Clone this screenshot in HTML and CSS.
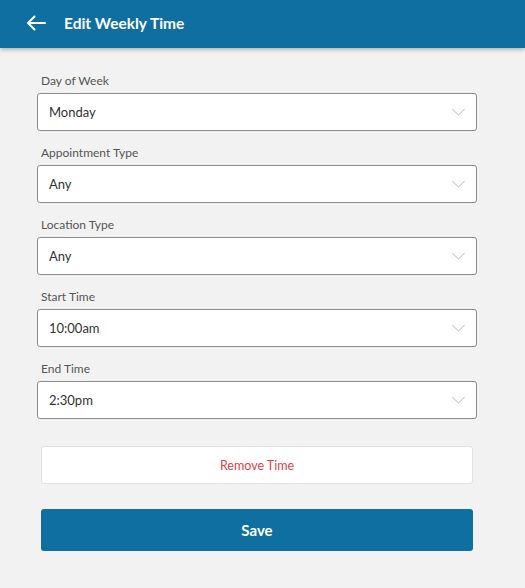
FILE: index.html
```html
<!DOCTYPE html>
<html lang="en">
<head>
    <meta charset="UTF-8">
    <meta name="viewport" content="width=device-width, initial-scale=1.0">
    <title>Edit Weekly Time</title>
    <link rel="stylesheet" href="styles.css">
</head>
<body>

<header class="topbar">
  <span class="back">
    <svg width="20" height="16" viewBox="0 0 20 16"><path d="M19 8H2M8.5 1.5L2 8l6.5 6.5" fill="none" stroke="#fff" stroke-width="2" stroke-linecap="round" stroke-linejoin="round"/></svg>
  </span>
  <h1>Edit Weekly Time</h1>
</header>

<div class="form">
  <!-- Jour -->
  <div class="field">
    <label>Day of Week</label>
    <div class="select"><span>Monday</span><i class="chev"></i></div>
  </div>
  <div class="field">
    <label>Appointment Type</label>
    <div class="select"><span>Any</span><i class="chev"></i></div>
  </div>
  <div class="field">
    <label>Location Type</label>
    <div class="select"><span>Any</span><i class="chev"></i></div>
  </div>
  <div class="field">
    <label>Start Time</label>
    <div class="select"><span>10:00am</span><i class="chev"></i></div>
  </div>
  <div class="field">
    <label>End Time</label>
    <div class="select"><span>2:30pm</span><i class="chev"></i></div>
  </div>

  <button class="btn-remove">Remove Time</button>
  <button class="btn-save">Save</button>
</div>

</body>
</html>
```

FILE: styles.css
```css
body {
    margin: 0;
    font-family: Lato, 'Noto Sans', sans-serif;
    background: #f2f2f2;
    color: #333;
    min-height: 100vh;
}
.topbar {
    height: 48px;
    box-sizing: border-box;
    padding-bottom: 3px;
    background: #0f6fa0;
    display: flex;
    align-items: center;
    padding-left: 26px;
    box-shadow: 0 2px 4px rgba(0,0,0,0.25);
}
.back {
    display: flex;
    width: 38px;
}
.topbar h1 {
    margin: 0;
    font-size: 15.5px;
    font-weight: 700;
    color: #fff;
}
.form {
    width: 440px;
    margin-left: 37px;
    padding-top: 25px;
}
.field {
    margin-bottom: 14px;
}
.field label {
    display: block;
    font-size: 12px;
    color: #555;
    padding-left: 4px;
    margin-bottom: 5px;
    line-height: 15px;
}
.select {
    height: 36px;
    background: #fff;
    border: 1px solid #8a8a8a;
    border-radius: 3px;
    display: flex;
    align-items: center;
    justify-content: space-between;
    padding: 0 13px 0 11px;
    font-size: 13px;
    color: #333;
}
.chev {
    width: 8px;
    height: 8px;
    border-right: 1.3px solid #c8c8c8;
    border-bottom: 1.3px solid #c8c8c8;
    transform: rotate(45deg);
    margin-top: -5px;
}
.btn-remove, .btn-save {
    display: block;
    width: 432px;
    margin-left: 4px;
    border-radius: 3px;
    font-family: Lato, 'Noto Sans', sans-serif;
    cursor: pointer;
}
.btn-remove {
    margin-top: 27px;
    height: 38px;
    background: #fff;
    border: 1px solid #e2e2e2;
    color: #d9434a;
    font-size: 12.5px;
}
.btn-save {
    margin-top: 25px;
    height: 42px;
    background: #0f6fa0;
    border: none;
    color: #fff;
    font-size: 15px;
    font-weight: 700;
}
```
